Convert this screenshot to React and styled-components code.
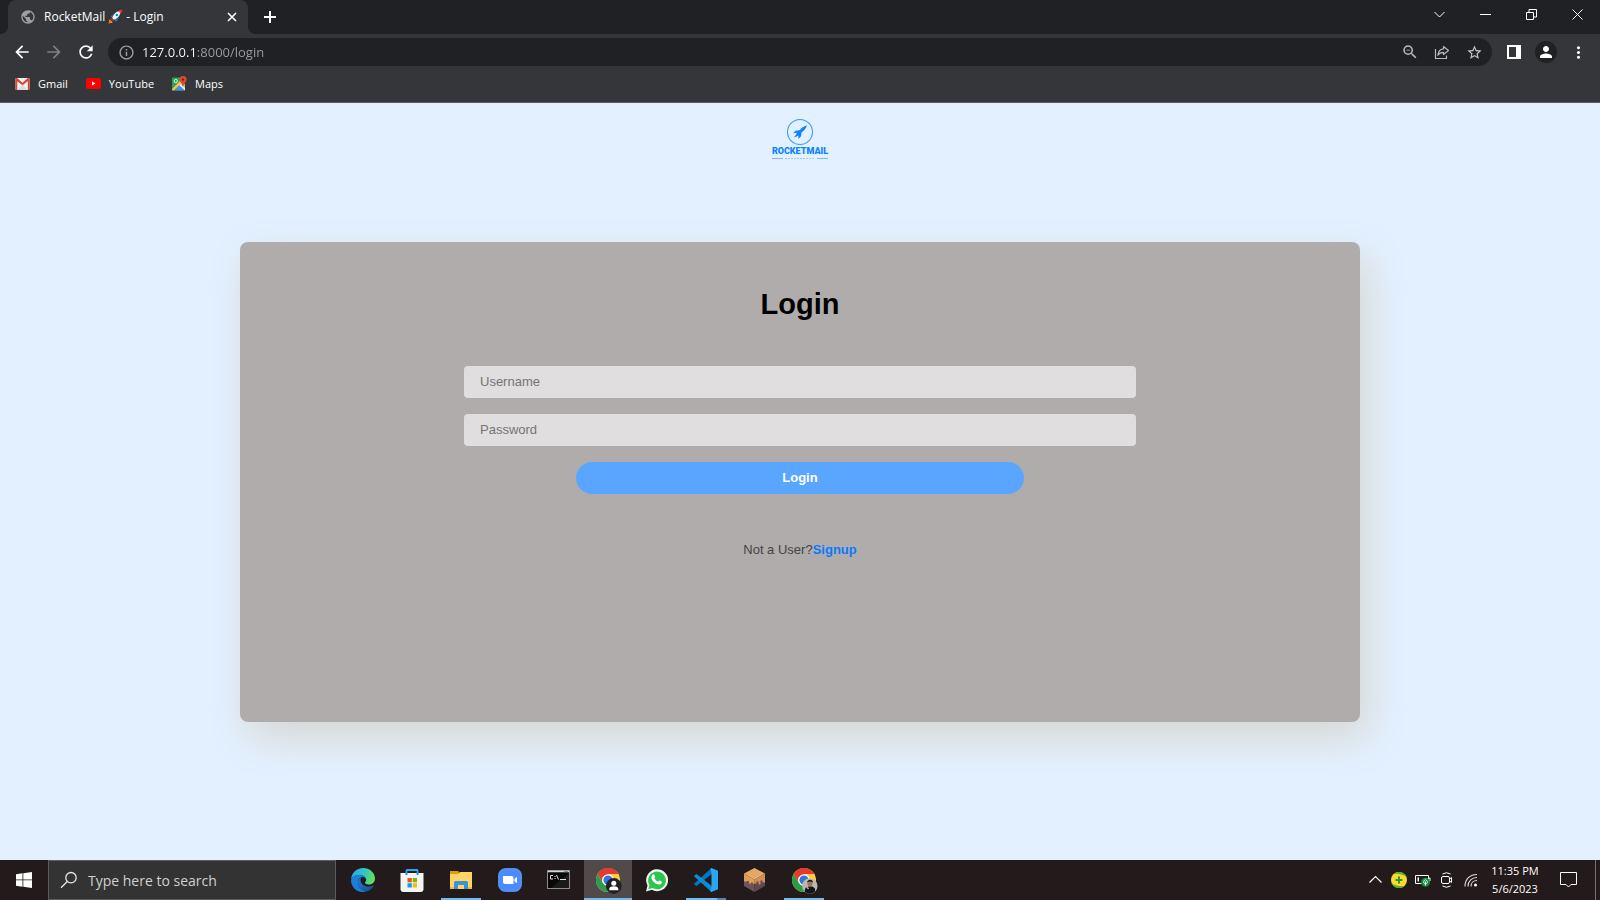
import React from "react";
import styled, { createGlobalStyle, css } from "styled-components";
import {
  MdArrowBack,
  MdArrowForward,
  MdRefresh,
  MdInfoOutline,
  MdZoomOut,
  MdStarBorder,
  MdPerson,
  MdMoreVert,
  MdPublic,
} from "react-icons/md";

const uiFont = '"Segoe UI", "Open Sans", sans-serif';
const pageFont = 'Arial, "Liberation Sans", sans-serif';

const GlobalStyle = createGlobalStyle`
  *, *::before, *::after { box-sizing: border-box; }
  body { margin: 0; background: #e2f0ff; }
  button, input { font: inherit; border: 0; padding: 0; margin: 0; outline: 0; }
  button { background: none; color: inherit; cursor: pointer; }
  svg { display: block; flex: none; }
`;

const Screen = styled.div`
  display: flex;
  flex-direction: column;
  min-height: 100vh;
  font-family: ${uiFont};
`;

/* ---------- browser window ---------- */

const BrowserChrome = styled.header`
  background: #35363a;
  color: #fff;
  border-bottom: 1px solid #5a5b5e;
`;

const TabStrip = styled.div`
  display: flex;
  height: 34px;
  padding-left: 8px;
  background: #202124;
`;

const Tab = styled.div`
  position: relative;
  display: flex;
  align-items: center;
  width: 240px;
  padding: 0 10px 0 12px;
  background: #35363a;
  border-radius: 8px 8px 0 0;
  font-size: 12px;

  &::before,
  &::after {
    content: "";
    position: absolute;
    bottom: 0;
    width: 8px;
    height: 8px;
  }
  &::before {
    right: 100%;
    background: radial-gradient(circle at 0 0, transparent 8px, #35363a 8px);
  }
  &::after {
    left: 100%;
    background: radial-gradient(circle at 100% 0, transparent 8px, #35363a 8px);
  }
`;

const TabTitle = styled.span`
  display: flex;
  flex: 1;
  align-items: center;
  gap: 3px;
  margin-left: 8px;
  padding-bottom: 2px;
  white-space: nowrap;
`;

const IconButton = styled.button`
  display: flex;
  align-items: center;
  justify-content: center;
  width: ${(p) => p.$w || 32}px;
  height: ${(p) => p.$h || 28}px;
  color: ${(p) => p.$color || "#fff"};
`;

const WindowControls = styled.div`
  display: flex;
  margin-left: auto;
`;

const Toolbar = styled.div`
  display: flex;
  align-items: center;
  height: 36px;
  padding: 0 6px;
`;

const Omnibox = styled.div`
  display: flex;
  flex: 1;
  align-items: center;
  height: 28px;
  margin: 0 6px;
  padding: 0 2px;
  border-radius: 14px;
  background: #202124;
`;

const Address = styled.input`
  flex: 1;
  min-width: 0;
  height: 20px;
  font-size: 13px;
  background: linear-gradient(90deg, #fff 54px, #9aa0a6 54px);
  background-clip: text;
  -webkit-text-fill-color: transparent;
`;

const Avatar = styled.span`
  display: flex;
  align-items: center;
  justify-content: center;
  width: 22px;
  height: 22px;
  border-radius: 50%;
  background: #202124;
`;

const Bookmarks = styled.nav`
  display: flex;
  gap: 18px;
  height: 32px;
  padding: 0 15px 5px;
`;

const Bookmark = styled.a`
  display: flex;
  align-items: center;
  gap: 8px;
  color: #fff;
  font-size: 11px;
  text-decoration: none;
`;

/* ---------- login page ---------- */

const Page = styled.main`
  display: flex;
  flex: 1;
  flex-direction: column;
  align-items: center;
  padding-top: 15px;
  background: #e2f0ff;
  font-family: ${pageFont};
  font-size: 13px;
`;

const Brand = styled.a`
  display: flex;
  flex-direction: column;
  align-items: center;
  height: 44px;
  color: #0a84ff;
  text-decoration: none;
`;

const BrandName = styled.span`
  font: 900 9px/11px Roboto, sans-serif;
`;

const Card = styled.form`
  display: flex;
  flex-direction: column;
  align-items: center;
  gap: 16px;
  width: 70%;
  min-height: 480px;
  margin-top: 80px;
  padding-top: 44px;
  border-radius: 8px;
  background: #b0acab;
  box-shadow: 8px 16px 40px #d8d7d3;
`;

const Title = styled.h1`
  margin: 0 0 28px;
  font-size: 29px;
  line-height: 36px;
`;

const Field = styled.input`
  width: 60%;
  height: 32px;
  padding: 0 16px 2px;
  border-radius: 4px;
  background: #e0dede;
  color: #222;

  &::placeholder {
    color: #757575;
  }
`;

const Submit = styled.button`
  width: 40%;
  height: 32px;
  padding-bottom: 2px;
  border-radius: 16px;
  background: #5aa5ff;
  color: #fff;
  font-weight: 700;
`;

const Hint = styled.p`
  margin: 31px 0 0;
  line-height: 18px;
  color: #444;
`;

const SignupLink = styled.a`
  color: #0a7aff;
  font-weight: 700;
  text-decoration: none;
`;

/* ---------- taskbar ---------- */

const Taskbar = styled.footer`
  display: flex;
  height: 40px;
  background: #231a1b;
  color: #fff;
`;

const SearchBox = styled.label`
  display: flex;
  align-items: center;
  gap: 10px;
  width: 288px;
  margin-right: 3px;
  padding-left: 11px;
  border: 1px solid #5c5c5c;
  background: #333;
`;

const SearchInput = styled.input`
  flex: 1;
  min-width: 0;
  height: 30px;
  background: none;
  color: #fff;
  font-size: 14px;

  &::placeholder {
    color: #d0d0d0;
    opacity: 1;
  }
`;

const Apps = styled.div`
  display: flex;
  gap: 1px;
`;

const AppButton = styled.button`
  display: flex;
  flex-direction: column;
  align-items: center;
  width: 48px;
  height: 40px;
  padding-top: 8px;
  ${(p) => p.$active && css`background: #504a4b;`}

  svg {
    overflow: visible;
  }

  &::after {
    content: "";
    width: ${(p) => (p.$active ? "48px" : "40px")};
    height: 2px;
    margin-top: 6px;
    background: ${(p) =>
      p.$stacked
        ? "linear-gradient(90deg, #76b9ed 31px, #5687b3 31px)"
        : p.$running || p.$active
        ? "#76b9ed"
        : "transparent"};
  }
`;

const Tray = styled.div`
  display: flex;
  margin-left: auto;
`;

const Clock = styled.button`
  width: 64px;
  font-size: 11px;
  line-height: 18px;
  white-space: nowrap;
`;

const ShowDesktop = styled.button`
  width: 5px;
  height: 40px;
  margin-left: 6px;
  border-left: 1px solid #777172;
`;

/* ---------- drawings ---------- */

const Rocket = () => (
  <svg width="15" height="15" viewBox="0 0 14 14" aria-label="rocket" role="img">
    <path d="M2.500 7 6 4 5 9z" fill="#1d8fd6" />
    <path d="M7.500 12 10.300 8 5 9z" fill="#1d8fd6" />
    <path d="M0.500 13.500 1.500 9.500 4.500 12.500z" fill="#ffb02e" />
    <path d="M0.500 13.500 2 11 3 12z" fill="#f8312f" />
    <path d="M3.500 8.500C5 4 8 1.500 12 1.500 12.500 5 10 9 5.500 10.500z" fill="#f2f5f8" stroke="#111" strokeWidth=".6" />
    <path d="M9.500 1.800 13.500 0.500 12.200 4.500z" fill="#f03a2d" />
    <circle cx="8.300" cy="5.600" r="1.200" fill="#1b86cf" />
    <path d="m3.200 8.300 2.600 2.600-1.200.8-2.200-2.200z" fill="#c42b1c" />
  </svg>
);

const line = (d, size = 11, w = 1) => (
  <svg width={size} height={size} viewBox={`0 0 ${size} ${size}`} fill="none" stroke="currentColor" strokeWidth={w}>
    <path d={d} />
  </svg>
);

const ShareIcon = () => (
  <svg width="16" height="16" viewBox="0 0 16 16" fill="none" stroke="currentColor" strokeWidth="1.200">
    <path d="M1.500 5v9.500h11V11.500" />
    <path d="M9.500 2.500 14.500 6.500 9.500 10.500V8.300C6.800 8.300 5 9.300 3.800 11.300 4.200 7.500 6.200 5.200 9.500 4.800z" strokeLinejoin="round" />
  </svg>
);

const GmailIcon = () => (
  <svg width="15" height="12" viewBox="0 0 15 12">
    <rect x=".5" width="14" height="12" rx="1" fill="#f1f1f1" />
    <path d="M2.500 12 7.500 6.500 12.500 12z" fill="#dcdcdc" />
    <path d="M.5 1v10q0 1 1 1h.7V3.300l5.300 4 5.300-4V12h.7q1 0 1-1V1q0-1-1-1h-.6L7.500 4.700 2.100 0h-.6q-1 0-1 1z" fill="#dc4437" />
  </svg>
);

const YouTubeIcon = () => (
  <svg width="15" height="11" viewBox="0 0 15 11">
    <rect width="15" height="11" rx="2.500" fill="#f00" />
    <path d="M6 3.500v4l3.500-2z" fill="#fff" />
  </svg>
);

const MapsIcon = () => (
  <svg width="15" height="15" viewBox="0 0 15 15">
    <rect y="1.500" width="13" height="13" rx="1" fill="#2da25a" />
    <path d="M1 14.500 7 8.500 13 14.500z" fill="#4a89f3" />
    <path d="M0 13 8 5 13 9v2L9 8 1.500 14.500H1q-1 0-1-1.500z" fill="#f4c92c" />
    <path d="m7 9 6 5.500v-3L9 8z" fill="#eee" />
    <path d="M11 0a3.500 3.500 0 0 1 3.600 3.500C14.600 6 12 6.500 11.300 10.500h-.6C10 6.500 7.500 6 7.500 3.500A3.500 3.500 0 0 1 11 0z" fill="#e0453a" />
    <circle cx="11" cy="3.600" r="1.200" fill="#7c2318" />
    <circle cx="3.800" cy="5" r="1.600" fill="none" stroke="#e6f4ea" />
  </svg>
);

const LogoMark = () => (
  <svg width="28" height="28" viewBox="0 0 28 28">
    <circle cx="14" cy="14" r="12.500" fill="none" stroke="#3d9cff" strokeWidth="1.100" />
    <path d="M21 7.200C17.500 8.200 15.300 10 13.500 12.200L9.500 12.800 7.200 15.300 10.800 14.800 10.200 16.500 7.800 19.500 11 18.200 12.300 17.500 12.500 21 15 18.200 15.500 14.500C18 12.500 20 10.500 21 7.200z" fill="#0a84ff" />
  </svg>
);

const LogoRule = () => (
  <svg width="58" height="3" viewBox="0 0 58 3" stroke="#79b9ff">
    <path d="M1 1.500h11M46 1.500h11" strokeWidth="1" />
    <path d="M14 1.500h30" strokeDasharray="2 1" strokeWidth="1" opacity=".7" />
  </svg>
);

const WindowsIcon = () => (
  <svg width="16" height="16" viewBox="0 0 16 16" fill="#fff">
    <path d="M0 2.200 6.500 1.300V7.500H0zM7.300 1.200 16 0V7.500H7.300zM0 8.300H6.500V14.700L0 13.800zM7.300 8.300H16V16L7.300 14.800z" />
  </svg>
);

const SearchIcon = () => (
  <svg width="18" height="18" viewBox="0 0 18 18" fill="none" stroke="#e8e8e8" strokeWidth="1.300">
    <circle cx="11" cy="6.700" r="5.200" />
    <path d="M7.300 10.500 1 16.800" />
  </svg>
);

const EdgeIcon = () => (
  <svg width="24" height="24" viewBox="0 0 24 24">
    <defs>
      <linearGradient id="edgeTop" x1="0" y1=".3" x2="1" y2=".5">
        <stop offset="0" stopColor="#2aa8e6" />
        <stop offset=".55" stopColor="#33c7c4" />
        <stop offset="1" stopColor="#67e04d" />
      </linearGradient>
      <linearGradient id="edgeLow" x1="0" y1="0" x2="1" y2="1">
        <stop offset="0" stopColor="#1b84dc" />
        <stop offset="1" stopColor="#114a8b" />
      </linearGradient>
    </defs>
    <path d="M0 11.500C.5 5 5.500 0 12 0c7 0 12 5 12 10.500 0 3.800-2.700 6-6 6-2.600 0-4-.9-4-1.700s1.100-1.100 1.100-3C15 9 12 7 8.500 7 4.500 7 1 9 0 11.500z" fill="url(#edgeTop)" />
    <path d="M0 12C1 8.500 4.500 6.800 8 6.800c4 0 7.100 2.200 7.100 5-.2-1.500-1.600-2.800-3.600-2.800C8.700 9 7 11.500 7 14.500c0 4.600 3.800 8.400 8 9C7 25.800 0 20 0 12z" fill="#1a7fd8" />
    <path d="M11 9C8.500 9.500 7 12 7 14.800 7 20 11.500 24 15.500 23.500c3.300-.7 5.800-3 7.300-5.600.3-.6-.2-.8-.7-.5C16 20.600 9.500 17 9.500 12c0-1.300.6-2.400 1.500-3z" fill="url(#edgeLow)" />
  </svg>
);

const StoreIcon = () => (
  <svg width="24" height="24" viewBox="0 0 24 24">
    <path d="M6.500 7V2.500Q6.500 2 7 2h10q.5 0 .5.500V7" fill="none" stroke="#29a8ea" strokeWidth="1.800" />
    <path d="M.5 5h23v16q0 3-3 3h-17q-3 0-3-3z" fill="#f3f3f3" />
    <path d="M6.500 5V7M17.500 5V7" stroke="#1488d8" strokeWidth="1.800" />
    <path d="M7.500 10H11.800V14.300H7.500z" fill="#f25022" />
    <path d="M12.700 10H17V14.300H12.700z" fill="#7fba00" />
    <path d="M7.500 15.200H11.800V19.500H7.500z" fill="#00a4ef" />
    <path d="M12.700 15.200H17V19.500H12.700z" fill="#ffb900" />
  </svg>
);

const FolderIcon = () => (
  <svg width="24" height="24" viewBox="0 0 24 24">
    <path d="M1 3.500h8l1.500 2H1z" fill="#e5a100" />
    <path d="M1 5h9l1-1h12v17H1z" fill="#ffd567" />
    <path d="M1 3h8.500v3H1z" fill="#e09c00" />
    <path d="M5 21V14.500Q5 13 6.500 13h11Q19 13 19 14.500V21h-4v-4H9v4z" fill="#3b93d8" />
    <path d="M1 19h4v2H1zM19 19h4v2h-4z" fill="#f3bb3e" />
  </svg>
);

const ZoomIcon = () => (
  <svg width="24" height="24" viewBox="0 0 24 24">
    <rect x=".7" y=".7" width="22.600" height="22.600" rx="6.500" fill="#4a8cff" stroke="#6a9ff5" />
    <path d="M5 8h8.500q2 0 2 2v6H7q-2 0-2-2zM16.500 11 19 8.800V15.200L16.500 13.300z" fill="#fff" />
  </svg>
);

const TerminalIcon = () => (
  <svg width="24" height="24" viewBox="0 0 24 24">
    <rect x=".5" y="2.500" width="22" height="18" fill="#080808" stroke="#8d8d8d" />
    <path d="M1 3.500h21" stroke="#d4d8dc" strokeWidth="1.500" />
    <path d="M17 3.500h4" stroke="#7b8da0" strokeWidth="1" />
    <path d="M6 7.500H3.500v3.500H6M8 8v1m0 1v1M9.500 7l2 4.500M13 11.500h6" fill="none" stroke="#ddd" strokeWidth="1" />
    <path d="M22 5v15H4z" fill="#fff" opacity=".08" />
  </svg>
);

const ChromeIcon = ({ children }) => (
  <svg width="24" height="24" viewBox="1 0 24 24">
    <circle cx="13" cy="12" r="12" fill="#ffcd40" />
    <path d="M13 12 2.600 6A12 12 0 0 1 23.400 6H13z" fill="#e33b2e" />
    <path d="M2.600 6A12 12 0 0 1 23.400 6H13A6 6 0 0 0 7.500 14.500z" fill="#e33b2e" />
    <path d="M2.600 6 7.800 15A6 6 0 0 0 14.500 17.800L12.500 24A12 12 0 0 1 2.600 6z" fill="#2a9d4c" />
    <circle cx="13" cy="12" r="5.800" fill="#fff" />
    <circle cx="13" cy="12" r="4.600" fill="#2f75e8" />
    {children}
  </svg>
);

const GuestBadge = () => (
  <g>
    <circle cx="18.800" cy="18" r="7.900" fill="#202124" />
    <circle cx="18.800" cy="15.300" r="2.500" fill="#fff" />
    <path d="M14.300 22.200v-1.500c0-1.700 2.500-2.500 4.500-2.500s4.500.8 4.500 2.500V22.200z" fill="#fff" />
  </g>
);

const PhotoBadge = () => (
  <g>
    <circle cx="18.800" cy="18" r="7.700" fill="#bdb7b1" />
    <path d="M13.500 23.500 14.500 19.800l3-1.300h4l2.500 2v3q-5 4.500-10.500 0z" fill="#151515" />
    <circle cx="19" cy="15.500" r="2.600" fill="#a57458" />
    <path d="M16.200 14.500c0-3.600 5.800-3.600 5.800 0-1.500-1.200-4.300-1.200-5.800 0z" fill="#17120f" />
    <path d="m15 18.500 3 1.500-1 1.500z" fill="#ddd" />
  </g>
);

const WhatsAppIcon = () => (
  <svg width="24" height="24" viewBox="0 0 24 24">
    <path d="M1 23.500 2.500 17.500A11 11 0 1 1 6.800 21.800z" fill="#f4f4f4" />
    <path d="M3.300 21.200 4.500 17.200A8.900 8.900 0 1 1 7.500 20.100z" fill="#2cc64f" />
    <path d="M7.800 6.600c.5-.5 1.200-.4 1.500.2l.8 1.800c.2.600-.7 1.300-.7 1.700.8 1.600 2 2.700 3.700 3.400.5.100 1-1.100 1.500-1.100l2 1c.5.300.4 1.100 0 1.700-.9 1.300-2.400 1.500-4 1-2.900-1-5.200-3.200-6-5.900-.3-1.500.1-2.800 1.200-3.800z" fill="#fff" />
  </svg>
);

const CodeIcon = () => (
  <svg width="24" height="24" viewBox="0 0 24 24">
    <path d="M17.500 6.300 2.500 18 0.300 16.500V15.500L17.500 0z" fill="#0076c6" />
    <path d="M17.500 17.700 2.500 6 0.300 7.500V8.500L17.500 24z" fill="#0e8ad8" />
    <path d="M17.500 0 24 2.800V21.200L17.500 24 16.500 23.500 17.500 17.500V6.500L16.500 .5z" fill="#2aa6f2" />
  </svg>
);

const BlockIcon = () => (
  <svg width="24" height="24" viewBox="0 0 24 24">
    <path d="M1 6 11.500 12V24L1 18z" fill="#6f5358" />
    <path d="M22 6 11.500 12V24L22 18z" fill="#604750" />
    <path d="M11.500 0 22 5.500 11.500 11.500 1 5.500z" fill="#e5a765" />
    <path d="M1 5.500 11.500 11.500V16H10V14.500H8V15.500H6V13H4v.5H1z" fill="#dd9f58" />
    <path d="M22 5.500 11.500 11.500V15.500h2v-2h2v3h2v-4h2v2H22z" fill="#cf9150" />
    <path d="M4.500 6.500 11.500 10.500 19 6.200" fill="none" stroke="#f0bf83" strokeWidth=".7" />
  </svg>
);

const ShieldIcon = () => (
  <svg width="16" height="16" viewBox="0 0 16 16">
    <circle cx="8" cy="8" r="8" fill="#f9da30" />
    <path d="M3 1.800A8 8 0 0 1 15.500 5C12 2 7 2 3 1.800zM13 14.200A8 8 0 0 1 .5 11C4 14 9 14 13 14.200z" fill="#58ae32" />
    <path d="M8 4.500v7M4.500 8h7" stroke="#2f9a2c" strokeWidth="2" />
  </svg>
);

const BatteryIcon = () => (
  <svg width="16" height="14" viewBox="0 0 16 14">
    <path d="M.5 2.500h13v8H.5zM14 5h1v3h-1" fill="none" stroke="#fff" />
    <path d="M2.500 4.500h1.500v4H2.500z" fill="#fff" />
    <circle cx="10.500" cy="9.200" r="4.500" fill="#10893e" />
    <path d="M10.500 6.200c2.500 2 2.300 4.500 0 4.800-2.300-.3-2.500-2.800 0-4.800zM10.500 8.500v4" fill="none" stroke="#fff" strokeWidth=".9" />
  </svg>
);

const CameraIcon = () => (
  <svg width="12" height="16" viewBox="0 0 12 16" fill="none" stroke="#fff">
    <rect x=".5" y="4.500" width="8" height="7" rx="1.500" />
    <path d="M8.500 7 10.500 5.500V10.500L8.500 9M1.500 2Q5.500 -.5 9.500 2M1.500 14Q5.500 16.500 9.500 14" />
  </svg>
);

const WifiIcon = () => (
  <svg width="14" height="14" viewBox="0 0 14 14" fill="none" stroke="#ddd" strokeWidth="1.100">
    <path d="M1 13.500C1 6 6 1.500 13 1.500M4 13.500C4 8 8 4.500 13 4.500M7 13.500C7 10 9.500 7.500 13 7.500" />
    <circle cx="11.500" cy="12" r="1.500" fill="#fff" stroke="none" />
  </svg>
);

const NoticeIcon = () => (
  <svg width="17" height="17" viewBox="0 0 17 17" fill="none" stroke="#fff">
    <path d="M.5 .5h16v12H11L8.500 15 6 12.500H.5z" />
  </svg>
);

const apps = [
  { name: "Microsoft Edge", icon: <EdgeIcon /> },
  { name: "Microsoft Store", icon: <StoreIcon /> },
  { name: "File Explorer", icon: <FolderIcon />, running: true },
  { name: "Zoom", icon: <ZoomIcon /> },
  { name: "Command Prompt", icon: <TerminalIcon /> },
  { name: "Chrome (guest)", icon: <ChromeIcon><GuestBadge /></ChromeIcon>, active: true },
  { name: "WhatsApp", icon: <WhatsAppIcon /> },
  { name: "Visual Studio Code", icon: <CodeIcon />, running: true, stacked: true },
  { name: "Block game", icon: <BlockIcon /> },
  { name: "Chrome", icon: <ChromeIcon><PhotoBadge /></ChromeIcon>, running: true },
];

const bookmarks = [
  { name: "Gmail", icon: <GmailIcon /> },
  { name: "YouTube", icon: <YouTubeIcon /> },
  { name: "Maps", icon: <MapsIcon /> },
];

function Browser() {
  return (
    <BrowserChrome>
      <TabStrip>
        <Tab>
          <MdPublic size={16} color="#9aa0a6" />
          <TabTitle>
            RocketMail <Rocket /> - Login
          </TabTitle>
          <IconButton $w={12} $h={16} aria-label="Close tab">
            {line("M1 1 9 9M9 1 1 9", 10, 1.6)}
          </IconButton>
        </Tab>
        <IconButton $w={44} $h={34} aria-label="New tab">
          {line("M6 0V12M0 6H12", 12, 2)}
        </IconButton>
        <WindowControls>
          <IconButton $w={46} aria-label="Search tabs">{line("M.5 3 5.500 8 10.500 3")}</IconButton>
          <IconButton $w={46} aria-label="Minimize">{line("M0 5.500H11")}</IconButton>
          <IconButton $w={46} aria-label="Restore">{line("M.5 3.500h7v7h-7zM3 3V.5h7.500V8H8")}</IconButton>
          <IconButton $w={46} aria-label="Close">{line("M.5 .5 10.500 10.500M10.500 .5.5 10.500")}</IconButton>
        </WindowControls>
      </TabStrip>
      <Toolbar>
        <IconButton aria-label="Back"><MdArrowBack size={20} /></IconButton>
        <IconButton aria-label="Forward" $color="#808184"><MdArrowForward size={20} /></IconButton>
        <IconButton aria-label="Reload"><MdRefresh size={20} /></IconButton>
        <Omnibox>
          <IconButton aria-label="Site information" $color="#9aa0a6"><MdInfoOutline size={17} /></IconButton>
          <Address aria-label="Address" defaultValue="127.0.0.1:8000/login" />
          <IconButton aria-label="Zoom" $color="#b8babd"><MdZoomOut size={18} /></IconButton>
          <IconButton aria-label="Share" $color="#b8babd"><ShareIcon /></IconButton>
          <IconButton aria-label="Bookmark this page" $color="#c4c6c9"><MdStarBorder size={17} /></IconButton>
        </Omnibox>
        <IconButton aria-label="Side panel">
          <svg width="14" height="14" viewBox="0 0 14 14">
            <path d="M0 0h14v14H0zM2 2v10h7V2z" fill="#fff" fillRule="evenodd" />
          </svg>
        </IconButton>
        <IconButton aria-label="Profile"><Avatar><MdPerson size={18} /></Avatar></IconButton>
        <IconButton aria-label="Menu"><MdMoreVert size={19} /></IconButton>
      </Toolbar>
      <Bookmarks aria-label="Bookmarks">
        {bookmarks.map((b) => (
          <Bookmark href="#" key={b.name}>{b.icon}{b.name}</Bookmark>
        ))}
      </Bookmarks>
    </BrowserChrome>
  );
}

function LoginPage() {
  return (
    <Page>
      <Brand href="#">
        <LogoMark />
        <BrandName>ROCKETMAIL</BrandName>
        <LogoRule />
      </Brand>
      <Card onSubmit={(e) => e.preventDefault()}>
        <Title>Login</Title>
        <Field type="text" placeholder="Username" aria-label="Username" />
        <Field type="password" placeholder="Password" aria-label="Password" />
        <Submit type="submit">Login</Submit>
        <Hint>
          Not a User?<SignupLink href="#">Signup</SignupLink>
        </Hint>
      </Card>
    </Page>
  );
}

function Desktop() {
  return (
    <Taskbar>
      <IconButton $w={48} $h={40} aria-label="Start"><WindowsIcon /></IconButton>
      <SearchBox>
        <SearchIcon />
        <SearchInput placeholder="Type here to search" aria-label="Search" />
      </SearchBox>
      <Apps>
        {apps.map((a) => (
          <AppButton key={a.name} aria-label={a.name} $active={a.active} $running={a.running} $stacked={a.stacked}>
            {a.icon}
          </AppButton>
        ))}
      </Apps>
      <Tray>
        <IconButton $w={24} $h={40} aria-label="Hidden icons">{line("M.5 8.500 6.500 2.500 12.500 8.500", 13, 1.2)}</IconButton>
        <IconButton $w={24} $h={40} aria-label="Security"><ShieldIcon /></IconButton>
        <IconButton $w={24} $h={40} aria-label="Battery"><BatteryIcon /></IconButton>
        <IconButton $w={24} $h={40} aria-label="Camera"><CameraIcon /></IconButton>
        <IconButton $w={24} $h={40} aria-label="Network"><WifiIcon /></IconButton>
        <Clock>11:35 PM<br />5/6/2023</Clock>
        <IconButton $w={42} $h={40} aria-label="Notifications"><NoticeIcon /></IconButton>
        <ShowDesktop aria-label="Show desktop" />
      </Tray>
    </Taskbar>
  );
}

export default function App() {
  return (
    <Screen>
      <GlobalStyle />
      <Browser />
      <LoginPage />
      <Desktop />
    </Screen>
  );
}
